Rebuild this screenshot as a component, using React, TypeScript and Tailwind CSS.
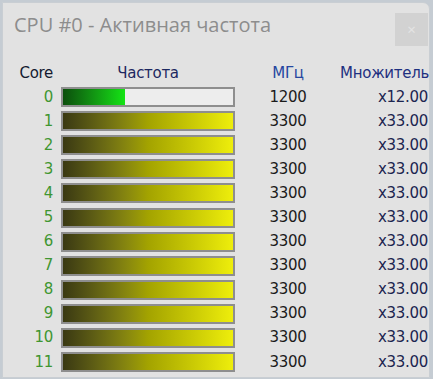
import React from "react";

const cores = [
  { id: 0, mhz: 1200, mult: "x12.00" },
  ...Array.from({ length: 11 }, (_, i) => ({ id: i + 1, mhz: 3300, mult: "x33.00" })),
];

const MAX = 3300;

export default function App() {
  return (
    <div className="w-[433px] h-[379px] bg-[#c5ccd3] pt-[2px] pl-[2px] overflow-hidden">
      <div className="w-[428px] h-[376px] bg-[#e2e2e2] border border-[#c9ced3] rounded-tr-[7px] overflow-hidden">
        {/* title bar */}
        <div className="flex items-start justify-between h-[58px]">
          <div
            className="pl-[11px] pt-[8px] text-[20px] leading-[28px] text-[#8d8d8d]"
            style={{ fontFamily: '"Open Sans", "Noto Sans", sans-serif' }}
          >
            CPU #0 - Активная частота
          </div>
          <div className="mt-[10px] mr-[1px] w-[33px] h-[33px] bg-[#d2d2d2] flex items-center justify-center text-[#e4e4e4] text-[15px] leading-none">
            ×
          </div>
        </div>

        {/* table */}
        <div
          className="text-[15px] leading-none tracking-[-0.3px]"
          style={{ fontFamily: '"DejaVu Sans", Verdana, sans-serif' }}
        >
          <div className="flex items-center h-[24px]">
            <div className="w-[50px] text-right text-[#141a30]">Core</div>
            <div className="ml-[8px] w-[174px] text-center text-[#1c2860]">Частота</div>
            <div className="ml-[33px] w-[40px] text-center text-[#2546a0]">МГц</div>
            <div className="flex-1 text-right text-[#1e3080]">Множитель</div>
          </div>

          {cores.map((c) => {
            const pct = (c.mhz / MAX) * 100;
            const full = c.mhz >= MAX;
            return (
              <div key={c.id} className="flex items-center h-[24.1px]">
                <div className="w-[50px] text-right text-[#3f9631]">{c.id}</div>
                <div className="ml-[8px] w-[174px] h-[20px] border-2 border-[#8e8e8e] bg-[#ededed] overflow-hidden">
                  <div
                    className={
                      full
                        ? "h-full bg-gradient-to-r from-[#3a3912] via-[#a3a300] to-[#eeee0c]"
                        : "h-full bg-gradient-to-r from-[#0b4f0c] to-[#14e414]"
                    }
                    style={{ width: `${pct}%` }}
                  />
                </div>
                <div className="ml-[33px] w-[40px] text-center text-[#1b1b1b]">{c.mhz}</div>
                <div className="flex-1 text-right text-[#1c2550] pr-[1px]">{c.mult}</div>
              </div>
            );
          })}
        </div>
      </div>
    </div>
  );
}
